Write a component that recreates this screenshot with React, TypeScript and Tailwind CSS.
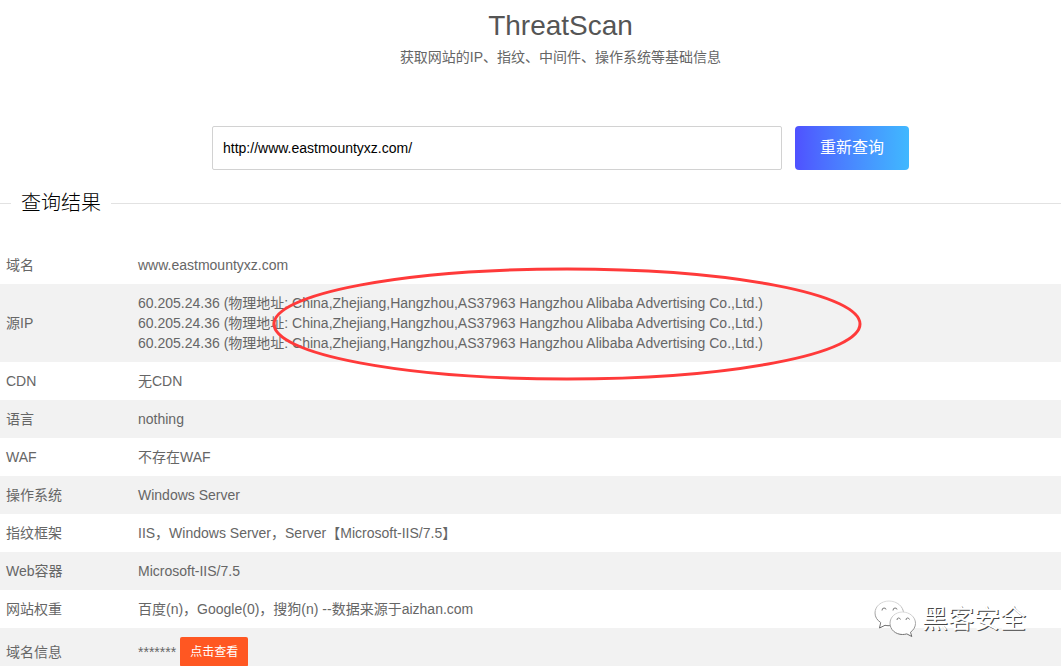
import type { ReactNode } from "react";

const ipLine =
  "60.205.24.36 (物理地址: China,Zhejiang,Hangzhou,AS37963 Hangzhou Alibaba Advertising Co.,Ltd.)";

function Highlight() {
  return (
    <svg
      className="pointer-events-none absolute top-[-26px] left-[134px] h-[114px] w-[590px] max-w-none"
      viewBox="0 0 590 114"
      aria-hidden="true"
    >
      <ellipse cx="295" cy="57" rx="293" ry="55" fill="none" stroke="#ff3a3a" strokeWidth="3" />
    </svg>
  );
}

const rows: { label: string; value: ReactNode }[] = [
  { label: "域名", value: "www.eastmountyxz.com" },
  {
    label: "源IP",
    value: (
      <div className="relative">
        <p>{ipLine}</p>
        <p>{ipLine}</p>
        <p>{ipLine}</p>
        <Highlight />
      </div>
    ),
  },
  { label: "CDN", value: "无CDN" },
  { label: "语言", value: "nothing" },
  { label: "WAF", value: "不存在WAF" },
  { label: "操作系统", value: "Windows Server" },
  { label: "指纹框架", value: "IIS，Windows Server，Server【Microsoft-IIS/7.5】" },
  { label: "Web容器", value: "Microsoft-IIS/7.5" },
  { label: "网站权重", value: "百度(n)，Google(0)，搜狗(n) --数据来源于aizhan.com" },
  {
    label: "域名信息",
    value: (
      <div className="flex items-center gap-1">
        <span>*******</span>
        <button type="button" className="h-[30px] rounded-xs bg-[#ff5722] px-[10px] text-xs text-white">
          点击查看
        </button>
      </div>
    ),
  },
];

function Watermark() {
  return (
    <div className="pointer-events-none absolute right-[35px] bottom-[38px] flex items-center gap-[6px]">
      <svg className="h-[38px] w-[42px]" viewBox="0 0 42 38" fill="none" aria-hidden="true">
        <defs>
          <linearGradient id="bubble-edge" x1="0" y1="0" x2="0" y2="1">
            <stop offset="0" stopColor="#ddd" />
            <stop offset="1" stopColor="#666" />
          </linearGradient>
        </defs>
        <path
          d="M15 1C7.500 1 1 6 1 13c0 4 2.200 7.300 5.700 9.500L5.500 28l5.500-2.700c1.200.3 2.700.4 4 .4C23 25.700 29.500 20 29.500 13.300S23 1 15 1Z"
          fill="#fff"
          stroke="url(#bubble-edge)"
        />
        <path
          d="M28.500 12C21.500 12 16 17 16 23.300S21.500 34.500 28.500 34.500c1.500 0 3-.2 4.300-.6l5 2.600-1.300-4.300c3-2.100 5-5.300 5-8.900C41.500 17 35.500 12 28.500 12Z"
          fill="#fff"
          stroke="url(#bubble-edge)"
        />
        <path
          d="M8 10.500q0-2.500 2-2.500t2 1.500M19 10.500q0-2.500 2-2.500t2 1.500M23 20q0-2 1.500-2t2 1.500M32 20q0-2 1.500-2t2 1.500"
          stroke="#777"
        />
      </svg>
      <span className="text-[26px] leading-[38px] text-white [text-shadow:1px_1px_0_#444]">
        黑客安全
      </span>
    </div>
  );
}

export default function App() {
  return (
    <main className="relative bg-white font-['Liberation_Sans','Noto_Sans_CJK_SC',sans-serif] text-sm leading-5 text-[#666]">
      <header className="pt-2 pl-[60px] text-center">
        <h1 className="text-[28px] leading-9 text-[#555]">ThreatScan</h1>
        <p className="mt-[3px]">获取网站的IP、指纹、中间件、操作系统等基础信息</p>
        <form className="mt-[59px] flex justify-center gap-[13px]" onSubmit={(e) => e.preventDefault()}>
          <input
            type="text"
            aria-label="网址"
            defaultValue="http://www.eastmountyxz.com/"
            className="h-11 w-full max-w-[570px] rounded-xs border border-[#d2d2d2] px-[10px] text-black outline-none"
          />
          <button
            type="submit"
            className="h-11 w-[114px] shrink-0 rounded bg-linear-to-r from-[#4f51ff] to-[#40b8ff] text-base text-white"
          >
            重新查询
          </button>
        </form>
      </header>

      <section>
        <div className="mt-[21px] flex items-center">
          <span className="h-px w-[11px] bg-[#e2e2e2]" />
          <h2 className="px-[10px] text-xl leading-6 font-light text-black">查询结果</h2>
          <span className="h-px grow bg-[#e2e2e2]" />
        </div>
        <table className="mt-[31px] w-full border-collapse">
          <tbody>
            {rows.map((row) => (
              <tr key={row.label} className="even:bg-[#f2f2f2]">
                <th scope="row" className="w-[132px] px-[6px] py-[9px] text-left font-normal">
                  {row.label}
                </th>
                <td className="px-[6px] py-[9px]">{row.value}</td>
              </tr>
            ))}
          </tbody>
        </table>
      </section>

      <Watermark />
    </main>
  );
}
